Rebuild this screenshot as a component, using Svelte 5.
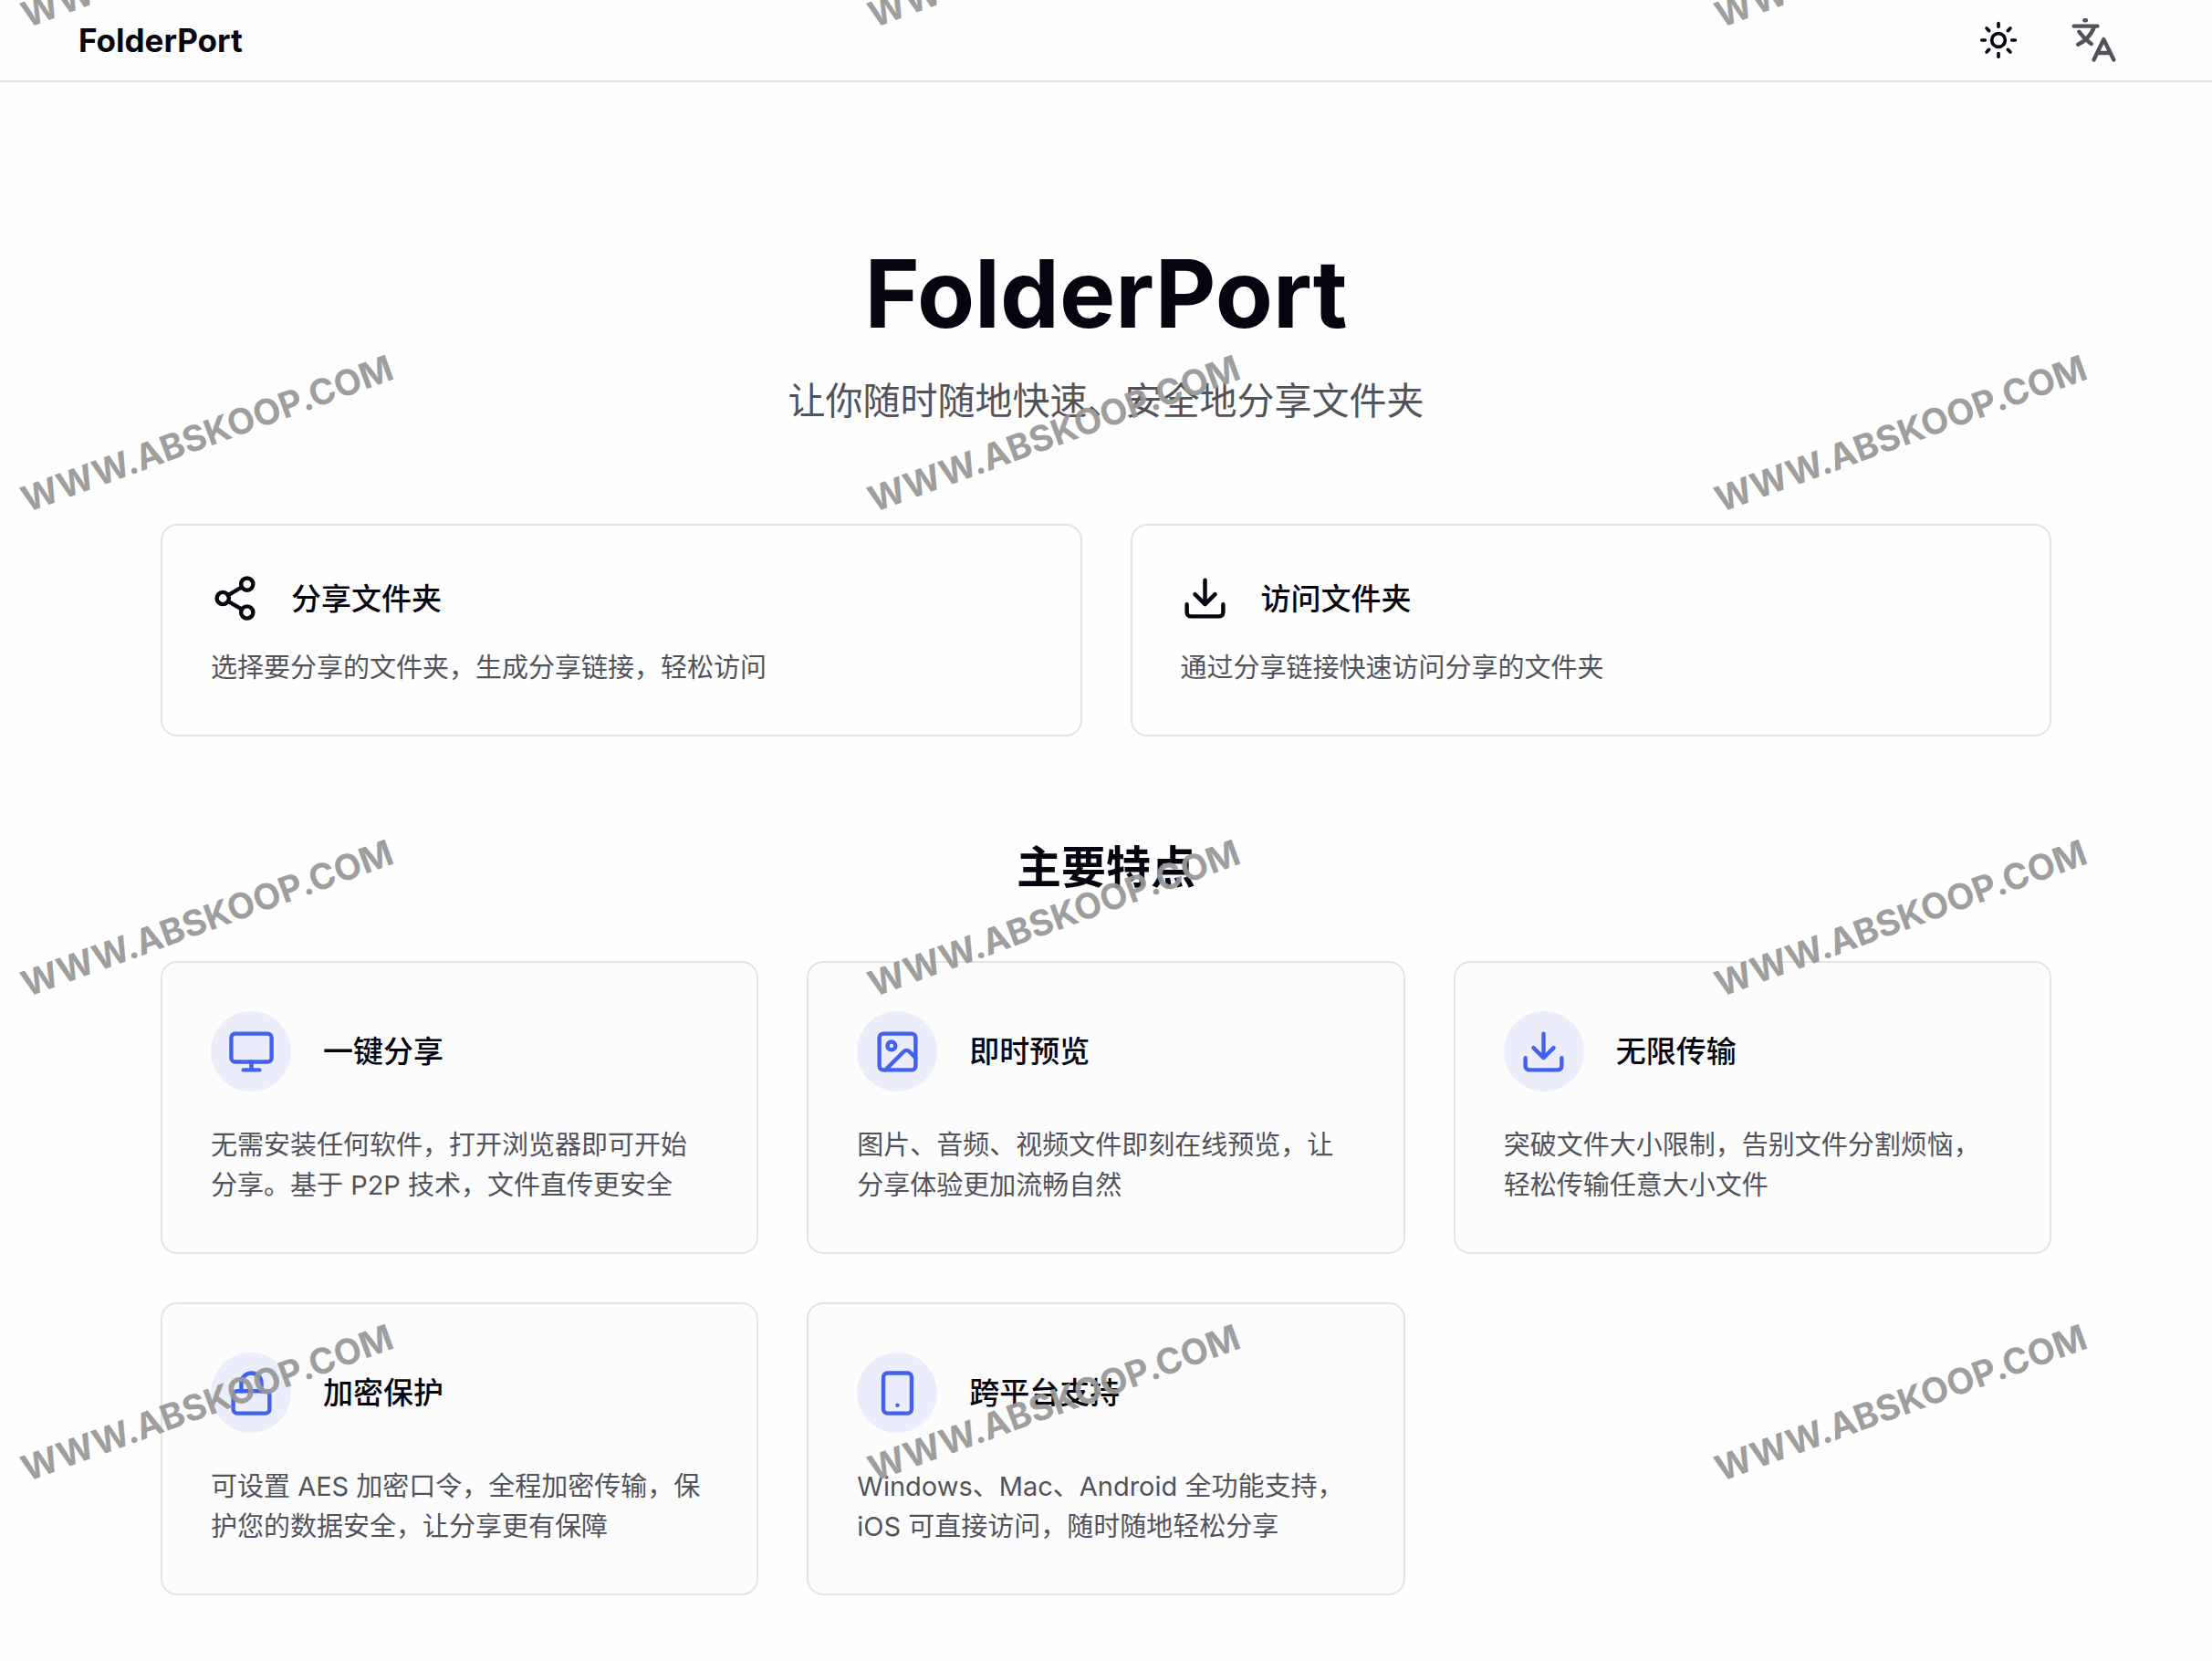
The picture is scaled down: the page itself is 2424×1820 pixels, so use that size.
<script lang="ts">
  type Shape = { tag: string; [attr: string]: string | number };

  const icons: Record<string, Shape[]> = {
    share: [
      { tag: "circle", cx: 18, cy: 5, r: 3 },
      { tag: "circle", cx: 6, cy: 12, r: 3 },
      { tag: "circle", cx: 18, cy: 19, r: 3 },
      { tag: "path", d: "M8.59 13.51 15.42 17.49M15.41 6.51 8.59 10.49" },
    ],
    download: [
      { tag: "path", d: "M21 15v4a2 2 0 0 1-2 2H5a2 2 0 0 1-2-2v-4M7 10l5 5 5-5M12 15V3" },
    ],
    monitor: [
      { tag: "rect", x: 2, y: 3, width: 20, height: 14, rx: 2 },
      { tag: "path", d: "M8 21h8M12 17v4" },
    ],
    image: [
      { tag: "rect", x: 3, y: 3, width: 18, height: 18, rx: 2 },
      { tag: "circle", cx: 9, cy: 9, r: 2 },
      { tag: "path", d: "m21 15-3.086-3.086a2 2 0 0 0-2.828 0L6 21" },
    ],
    lock: [
      { tag: "rect", x: 3, y: 11, width: 18, height: 11, rx: 2 },
      { tag: "path", d: "M7 11V7a5 5 0 0 1 10 0v4" },
    ],
    phone: [
      { tag: "rect", x: 5, y: 2, width: 14, height: 20, rx: 2 },
      { tag: "path", d: "M12 18h.01" },
    ],
    sun: [
      { tag: "circle", cx: 12, cy: 12, r: 4 },
      {
        tag: "path",
        d: "M12 2v2M12 20v2M4.93 4.93l1.41 1.41M17.66 17.66l1.41 1.41M2 12h2M20 12h2M6.34 17.66l-1.41 1.41M19.07 4.93l-1.41 1.41",
      },
    ],
    translate: [
      { tag: "path", d: "M2.1 4.8h11.7M7.4 1.9h.7M4.7 7.6c1.6 2.2 3.7 4.3 6 6M12.3 5c-1.3 3.5-4.3 7-8.1 8.9" },
      { tag: "path", d: "M12 21.5 16.9 11.4 21.9 21.5M13.7 18.1h6.4" },
    ],
  };

  const actions = [
    { icon: "share", title: "分享文件夹", text: "选择要分享的文件夹，生成分享链接，轻松访问" },
    { icon: "download", title: "访问文件夹", text: "通过分享链接快速访问分享的文件夹" },
  ];

  const features = [
    { icon: "monitor", title: "一键分享", text: "无需安装任何软件，打开浏览器即可开始分享。基于 P2P 技术，文件直传更安全" },
    { icon: "image", title: "即时预览", text: "图片、音频、视频文件即刻在线预览，让分享体验更加流畅自然" },
    { icon: "download", title: "无限传输", text: "突破文件大小限制，告别文件分割烦恼，轻松传输任意大小文件" },
    { icon: "lock", title: "加密保护", text: "可设置 AES 加密口令，全程加密传输，保护您的数据安全，让分享更有保障" },
    { icon: "phone", title: "跨平台支持", text: "Windows、Mac、Android 全功能支持，iOS 可直接访问，随时随地轻松分享" },
  ];

  const marks = Array(12).fill("WWW.ABSKOOP.COM");
</script>

{#snippet icon(name: string)}
  <svg class="icon {name}" viewBox="0 0 24 24" aria-hidden="true">
    {#each icons[name] as { tag, ...attrs }}
      <svelte:element this={tag} xmlns="http://www.w3.org/2000/svg" {...attrs} />
    {/each}
  </svg>
{/snippet}

<div class="page" lang="zh-CN">
  <header class="topbar">
    <a class="brand" href="/">FolderPort</a>
    <div class="tools">
      <button type="button" aria-label="切换主题">{@render icon("sun")}</button>
      <button type="button" aria-label="切换语言">{@render icon("translate")}</button>
    </div>
  </header>

  <main>
    <section class="hero">
      <h1>FolderPort</h1>
      <p>让你随时随地快速、安全地分享文件夹</p>
    </section>

    <section class="actions">
      {#each actions as action}
        <a class="card" href="/">
          <div class="card-head">
            {@render icon(action.icon)}
            <h3>{action.title}</h3>
          </div>
          <p>{action.text}</p>
        </a>
      {/each}
    </section>

    <h2>主要特点</h2>

    <section class="features">
      {#each features as feature}
        <article class="card feature">
          <div class="card-head">
            <span class="badge">{@render icon(feature.icon)}</span>
            <h3>{feature.title}</h3>
          </div>
          <p>{feature.text}</p>
        </article>
      {/each}
    </section>
  </main>

  <div class="watermark" aria-hidden="true">
    {#each marks as mark}
      <span>{mark}</span>
    {/each}
  </div>
</div>

<style>
  :global(body) {
    background: #fefefe;
  }

  .page {
    position: relative;
    min-height: 100vh;
    overflow: hidden;
    color: #05050f;
    font-family: Inter, "Noto Sans CJK SC", sans-serif;
    font-size: 29px;
    line-height: 44px;
  }

  h1,
  h2,
  h3,
  p {
    margin: 0;
  }

  .topbar {
    display: flex;
    align-items: center;
    justify-content: space-between;
    height: 88px;
    padding: 0 96px 0 86px;
    border-bottom: 2px solid #e4e4e7;
  }

  .brand {
    color: inherit;
    font-size: 35px;
    font-weight: 700;
    text-decoration: none;
  }

  .tools {
    display: flex;
    align-items: center;
    gap: 38px;
  }

  .tools button {
    display: grid;
    place-items: center;
    width: 67px;
    height: 67px;
    padding: 0;
    border: 0;
    background: none;
    color: inherit;
    cursor: pointer;
  }

  .icon {
    flex: none;
    width: 53px;
    height: 53px;
    fill: none;
    stroke: currentColor;
    stroke-width: 2;
    stroke-linecap: round;
    stroke-linejoin: round;
  }

  .sun {
    width: 44px;
    height: 44px;
  }

  .tools .translate {
    color: #52525b;
  }

  main {
    padding: 180px 176px 72px;
  }

  .hero {
    text-align: center;
  }

  h1 {
    font-size: 103px;
    font-weight: 700;
    line-height: 103px;
  }

  .hero p {
    margin-top: 36px;
    color: #52525b;
    font-size: 41px;
    line-height: 60px;
  }

  .actions,
  .features {
    display: grid;
    grid-template-columns: repeat(2, 1fr);
    gap: 53px;
  }

  .actions {
    margin-top: 105px;
  }

  .features {
    grid-template-columns: repeat(3, 1fr);
  }

  h2 {
    margin: 114px 0 72px;
    font-size: 49px;
    font-weight: 700;
    line-height: 60px;
    text-align: center;
  }

  .card {
    padding: 53px 53px 51px;
    border: 2px solid #e4e4e7;
    border-radius: 18px;
    color: inherit;
    text-decoration: none;
  }

  .card-head {
    display: flex;
    align-items: center;
    gap: 35px;
    margin-bottom: 28px;
  }

  .card p {
    color: #52525b;
  }

  h3 {
    font-size: 33px;
    font-weight: 500;
  }

  .feature {
    background: #fcfcfd;
  }

  .feature .card-head {
    margin-bottom: 37px;
  }

  .badge {
    display: grid;
    flex: none;
    place-items: center;
    width: 88px;
    height: 88px;
    border-radius: 50%;
    background: #ebedfb;
    color: #4361ee;
  }

  /* repeated diagonal stamp above the whole page */
  .watermark {
    position: absolute;
    top: -322px;
    left: 12px;
    display: grid;
    grid-template-columns: repeat(3, 928px);
    grid-auto-rows: 531px;
    pointer-events: none;
  }

  .watermark span {
    align-self: center;
    justify-self: start;
    color: rgba(152, 152, 152, 0.95);
    font-size: 39px;
    font-weight: 700;
    transform: rotate(-20deg);
  }
</style>
